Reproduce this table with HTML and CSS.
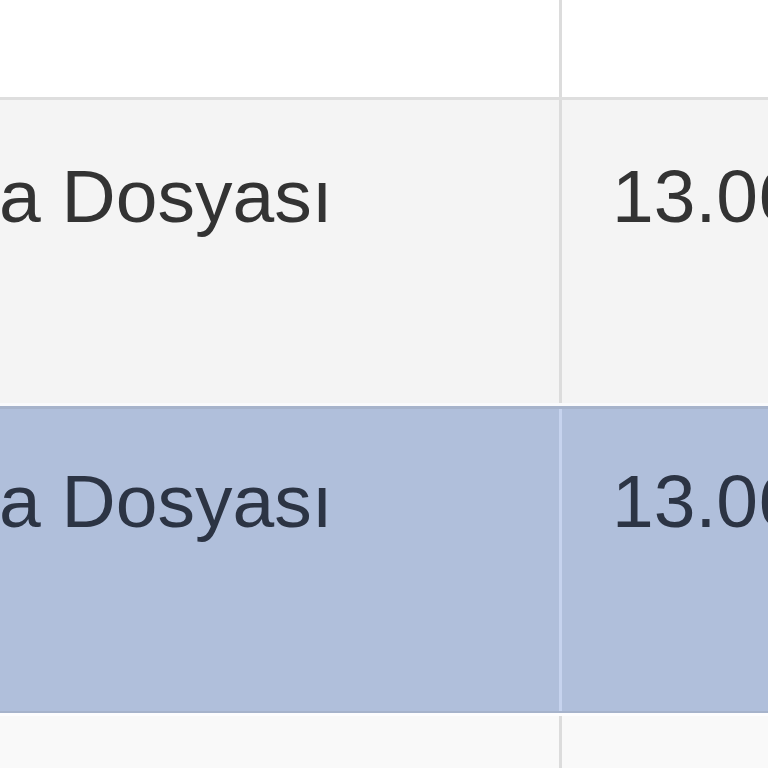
FILE: index.html
```html
<!DOCTYPE html>
<html lang="tr">
<head>
<meta charset="utf-8">
<title>Dosyalar</title>
<link rel="stylesheet" href="styles.css">
</head>
<body>
<div class="table">
  <div class="row row-head">
    <div class="cell name"></div>
    <div class="cell date"></div>
  </div>
  <div class="row row-alt">
    <div class="cell name"><span class="clip">a Dosyası</span></div>
    <div class="cell date">13.06.2023</div>
  </div>
  <div class="row row-selected">
    <div class="cell name"><span class="clip">a Dosyası</span></div>
    <div class="cell date">13.06.2023</div>
  </div>
  <div class="row row-last">
    <div class="cell name"></div>
    <div class="cell date"></div>
  </div>
</div>
</body>
</html>
```

FILE: styles.css
```css
html, body {
  margin: 0;
  padding: 0;
  width: 768px;
  height: 768px;
  overflow: hidden;
  background: #ffffff;
}

.table {
  width: 1000px;
  font-family: "Liberation Sans", Arial, sans-serif;
  font-size: 75px;
  line-height: 76px;
  color: #333333;
}

.row {
  display: grid;
  grid-template-columns: 562px 1fr;
}

.cell {
  white-space: nowrap;
  overflow: hidden;
}

.cell.name {
  border-right: 3px solid #dcdcdc;
}

.cell.name .clip {
  display: block;
  margin-left: -1px;
}

.cell.date {
  padding-left: 50px;
}

.row-head {
  height: 97px;
  background: #ffffff;
  border-bottom: 3px solid #dedede;
}

.row-alt {
  height: 303px;
  background: #f4f4f4;
  border-bottom: 3px solid #f9fafc;
}

.row-alt .cell {
  padding-top: 58px;
}

.row-selected {
  height: 302px;
  background: #b0bfdb;
  border-top: 3px solid #a6b3cb;
  border-bottom: 2px solid #a6b3cb;
  color: #2c3444;
}

.row-selected .cell {
  padding-top: 54px;
}

.row-selected .cell.name {
  border-right-color: #c6d3ee;
}

.row-last {
  height: 60px;
  background: #f9f9f9;
  border-top: 3px solid #fdfdfe;
}
```
